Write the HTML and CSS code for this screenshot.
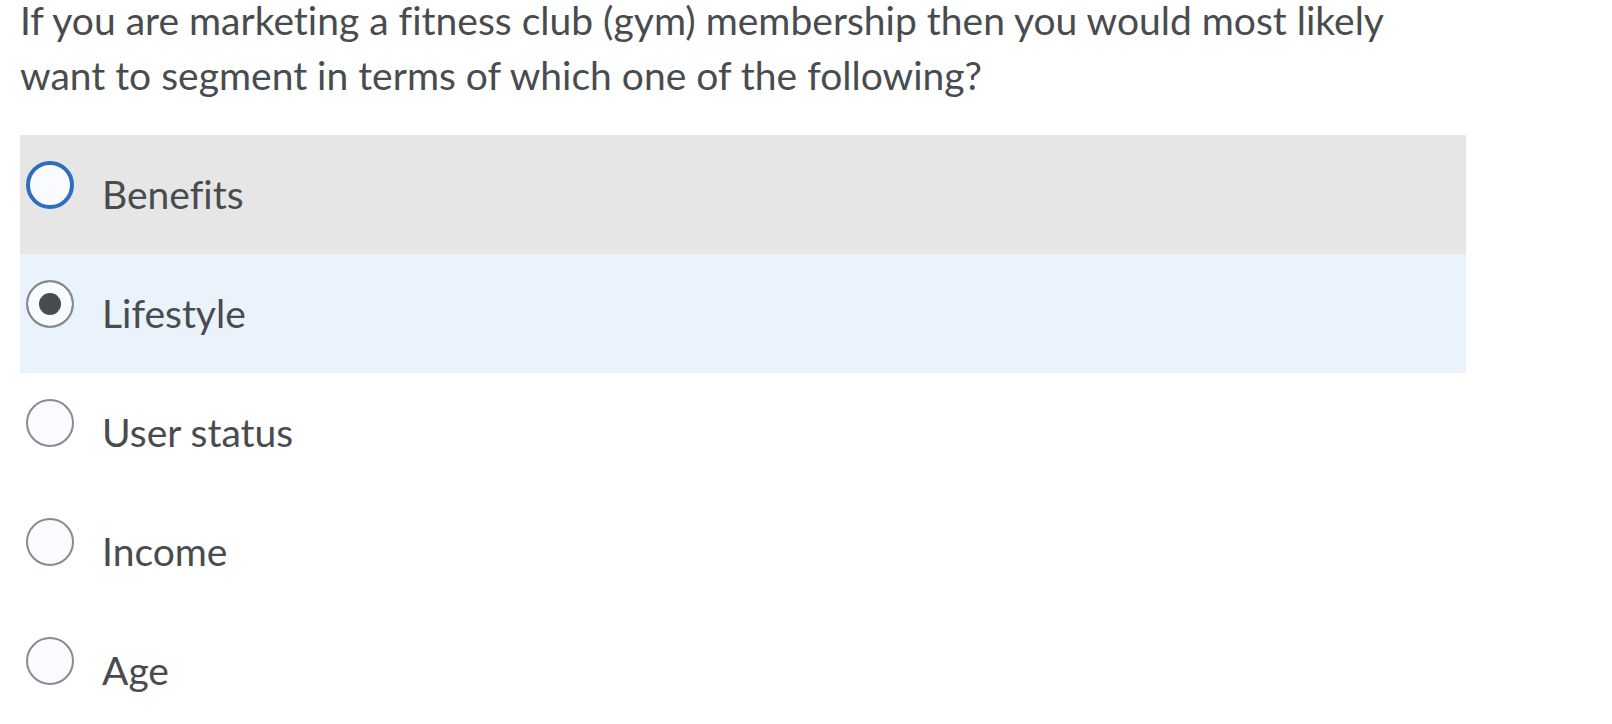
FILE: index.html
```html
<!DOCTYPE html>
<html lang="en">
<head>
<meta charset="utf-8">
<title>Question</title>
<link rel="stylesheet" href="styles.css">
</head>
<body>
<div class="page">
  <p class="question">If you are marketing a fitness club (gym) membership then you would most likely want to segment in terms of which one of the following?</p>
  <div class="options">
    <label class="option option-hover">
      <input type="radio" name="q" class="radio radio-focus">
      <span class="label">Benefits</span>
    </label>
    <label class="option option-selected">
      <input type="radio" name="q" class="radio" checked>
      <span class="label">Lifestyle</span>
    </label>
    <label class="option">
      <input type="radio" name="q" class="radio">
      <span class="label">User status</span>
    </label>
    <label class="option">
      <input type="radio" name="q" class="radio">
      <span class="label">Income</span>
    </label>
    <label class="option">
      <input type="radio" name="q" class="radio">
      <span class="label">Age</span>
    </label>
  </div>
</div>
</body>
</html>
```

FILE: styles.css
```css
html, body {
  margin: 0;
  padding: 0;
  background: #ffffff;
  overflow: hidden;
}

body {
  font-family: Lato, "Open Sans", sans-serif;
  color: #494c4e;
  font-variant-ligatures: none;
}

.page {
  padding: 0 20px;
}

.question {
  margin: -7px 0 0 0;
  max-width: 1400px;
  font-size: 39px;
  line-height: 55px;
}

.options {
  width: 1446px;
  margin-top: 32px;
  display: flex;
  flex-direction: column;
}

.option {
  display: flex;
  align-items: flex-start;
  height: 119px;
  box-sizing: border-box;
  padding: 26px 0 0 6px;
}

.option-hover {
  background: #e6e6e6;
}

.option-selected {
  background: #eaf2fb;
}

.radio {
  appearance: none;
  -webkit-appearance: none;
  margin: 0;
  flex: 0 0 auto;
  width: 48px;
  height: 48px;
  box-sizing: border-box;
  border-radius: 50%;
  border: 2px solid #868c8f;
  background: #f9fbff;
}

.radio:checked {
  background: #494c4e;
  box-shadow: inset 0 0 0 11px #f9fbff;
}

.radio-focus {
  border: 4px solid #2f6ebf;
}

.label {
  margin-left: 28px;
  padding-top: 9px;
  font-size: 39px;
  line-height: 48px;
}
```
